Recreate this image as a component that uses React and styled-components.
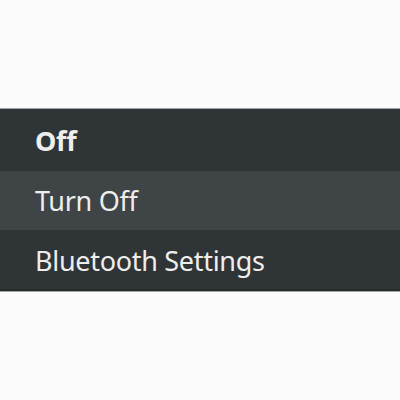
import React from "react";
import styled, { createGlobalStyle } from "styled-components";

const Global = createGlobalStyle`
  html, body {
    margin: 0;
    padding: 0;
    background: #fbfbfb;
    font-family: "Noto Sans", "Open Sans", sans-serif;
  }
`;

const Page = styled.div`
  width: 400px;
  height: 400px;
  padding-top: 108px;
  box-sizing: border-box;
`;

const Menu = styled.div`
  display: flex;
  flex-direction: column;
  background: #2f3436;
  border-top: 1px solid #a3a5a5;
  border-bottom: 1px solid #9ea1a1;
  box-shadow: inset 0 -2px 0 #272b2c;
`;

const Item = styled.div`
  display: flex;
  align-items: center;
  height: ${({ tall }) => tall || 60}px;
  padding-left: 35px;
  color: #eeeeec;
  font-size: 27px;
  letter-spacing: -0.3px;
  font-weight: ${({ bold }) => (bold ? 700 : 400)};
  background: ${({ hover }) => (hover ? "#3f4446" : "transparent")};
`;

export default function App() {
  return (
    <Page>
      <Global />
      <Menu>
        <Item bold tall={62}>Off</Item>
        <Item hover tall={59}>Turn Off</Item>
        <Item tall={61}>Bluetooth Settings</Item>
      </Menu>
    </Page>
  );
}
